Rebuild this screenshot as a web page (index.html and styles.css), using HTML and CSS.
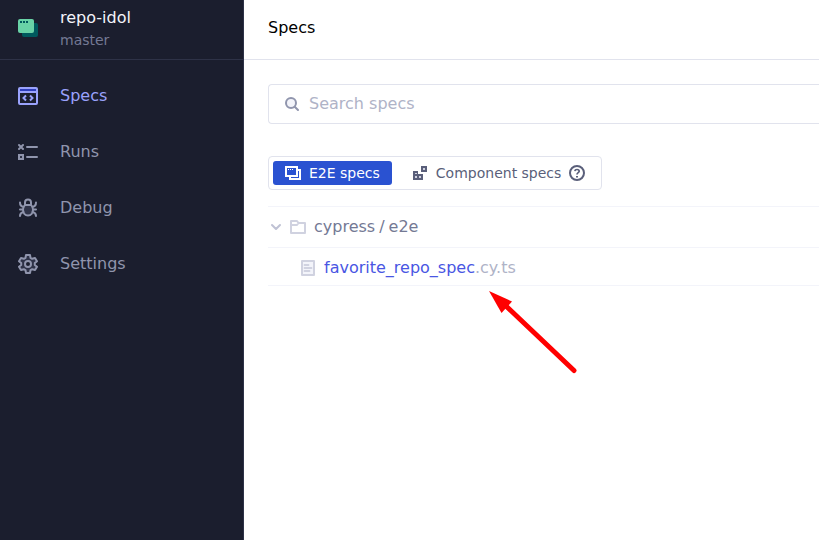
FILE: index.html
```html
<!DOCTYPE html>
<html lang="en">
<head>
<meta charset="utf-8">
<title>Specs</title>
<link rel="stylesheet" href="styles.css">
</head>
<body>
<div class="app">
  <aside class="sidebar">
    <header class="project">
      <svg class="nav-icon" width="20" height="20" viewBox="0 0 20 20"><rect x="4" y="5" width="16" height="14" rx="2" fill="#00595d"/><rect width="16" height="14" y="1" rx="2" fill="#69d3a7"/><path d="M2 3h2v2H2zM5 3h2v2H5zM8 3h2v2H8z" fill="#00595d"/></svg>
      <div>
        <div class="project-name">repo-idol</div>
        <div class="branch">master</div>
      </div>
    </header>
    <nav>
      <a class="nav-item active">
        <svg class="nav-icon" width="20" height="20" viewBox="0 0 20 20" fill="none" stroke="#9aa2fc" stroke-width="2"><rect x="1" y="2" width="18" height="16" rx="1"/><path d="M1 6h18M8 9.500l-2.500 2.500L8 14.500M12 9.500l2.500 2.500-2.500 2.500"/><path d="M2 3h16v2H2z" fill="#2e3dbb" stroke="none"/></svg>
        <span>Specs</span>
      </a>
      <a class="nav-item">
        <svg class="nav-icon" width="20" height="20" viewBox="0 0 20 20" fill="none" stroke="#9095ad" stroke-width="2"><path d="M1 3l4 4M5 3L1 7M9 5h10M9 15h10" stroke-linecap="round"/><rect x="1" y="13" width="4" height="4" fill="#2e3247"/></svg>
        <span>Runs</span>
      </a>
      <a class="nav-item">
        <svg class="nav-icon" width="20" height="20" viewBox="0 0 20 20" fill="none" stroke="#9095ad" stroke-width="2" stroke-linecap="round"><path d="M7 7V4.500a3 3 0 0 1 6 0V7"/><path d="M7 7h6c1.300 1 2 2.500 2 4.500 0 3.500-2 6-5 6s-5-2.500-5-6C5 9.500 5.700 8 7 7z" fill="#2e3247"/><path d="M5.500 9C3 8.500 2 7.500 2 4.500M14.500 9C17 8.500 18 7.500 18 4.500M5 11.500H2M15 11.500h3M5.500 14C3 14.500 2 15.500 2 18M14.500 14c2.500.5 3.500 1.500 3.500 4"/></svg>
        <span>Debug</span>
      </a>
      <a class="nav-item">
        <svg class="nav-icon" width="20" height="20" viewBox="0 0 20 20" fill="none" stroke="#9095ad" stroke-width="2" stroke-linejoin="round"><path d="M8 1h4l.5 2.800 1.700 1L17 4l2 3.300-2.200 1.800v1.900L19 12.700 17 16l-2.800-.8-1.700 1L12 19H8l-.5-2.800-1.700-1L3 16l-2-3.300L3.200 11V9.100L1 7.300 3 4l2.800.8 1.700-1z" fill="#2e3247"/><circle cx="10" cy="10" r="3" fill="#1b1e2e"/></svg>
        <span>Settings</span>
      </a>
    </nav>
  </aside>
  <main class="main">
    <h1 class="title">Specs</h1>
    <section class="content">
      <div class="search">
        <svg width="16" height="16" viewBox="0 0 16 16" fill="none" stroke="#9095ad" stroke-width="2" stroke-linecap="round"><circle cx="7" cy="7" r="5" fill="#f3f4fa"/><path d="M10.700 10.700L14 14"/></svg>
        <span>Search specs</span>
      </div>
      <div class="tabs">
        <div class="tab selected">
          <svg width="16" height="16" viewBox="0 0 16 16" fill="none" stroke="#fff" stroke-width="2"><path d="M13 5h2v9H5v-2M1 2h11v9H1z"/><path d="M3 4.500h1M5 4.500h1M7 4.500h1" stroke-width="1"/></svg>
          <span>E2E specs</span>
        </div>
        <div class="tab">
          <svg width="16" height="16" viewBox="0 0 16 16"><path d="M1 6h5v3h5v6H1zM9 1h6v6H9z" fill="#5a5f7a"/><path d="M3 8h2v1H3zM3 11h2v2H3zM7 11h2v2H7zM11 3h2v2h-2z" fill="#d0d2e0"/></svg>
          <span>Component specs</span>
          <svg width="16" height="16" viewBox="0 0 16 16" fill="none" stroke="#5a5f7a" stroke-width="2"><circle cx="8" cy="8" r="7"/><path d="M5.800 6.200C6 4.900 6.800 4.500 8 4.500c1.300 0 2.200.7 2.200 1.800C10.200 7.700 8 7.700 8 9.500" stroke-width="1.700"/><path d="M7 11h2v1.500H7z" fill="#5a5f7a" stroke="none"/></svg>
        </div>
      </div>
      <div class="tree">
        <div class="row folder">
          <svg width="16" height="16" viewBox="0 0 16 16" fill="none" stroke="#bfc2d4" stroke-width="2" stroke-linecap="round" stroke-linejoin="round"><path d="M4 6l4 4 4-4"/></svg>
          <svg class="folder-icon" width="16" height="16" viewBox="0 0 16 16" fill="none" stroke="#d0d2e0" stroke-width="2" stroke-linejoin="round"><path d="M1 14V2h6l1.500 2H15v10zM1 6h6l1.500-2"/></svg>
          <span class="path">cypress<i>/</i>e2e</span>
        </div>
        <div class="row file">
          <svg width="16" height="16" viewBox="0 0 16 16" fill="none" stroke="#d0d2e0" stroke-width="2" stroke-linejoin="round"><path d="M2 1h12v14H2z" fill="#f3f4fa"/><path d="M4.500 5h4M4.500 8h7M4.500 11h5" stroke-width="1.800" stroke-linecap="round"/></svg>
          <span class="filename">favorite_repo_spec<span class="ext">.cy.ts</span></span>
        </div>
      </div>
    </section>
  </main>
  <svg class="arrow" width="92" height="88" viewBox="0 0 92 88"><path d="M17 16l68 64.500" stroke="red" stroke-width="5" stroke-linecap="round"/><path d="M0 1l23 10.500L12.500 23z" fill="red"/></svg>
</div>
</body>
</html>
```
FILE: styles.css
```css
* { box-sizing: border-box; }
body {
  margin: 0;
  font: 16px/24px "DejaVu Sans", sans-serif;
  background: #fff;
}
svg { display: block; flex: none; }
.app {
  position: relative;
  display: flex;
  height: 540px;
  overflow: hidden;
}
.sidebar {
  flex: none;
  width: 244px;
  background: #1b1e2e;
  border-right: 1px solid #2e3247;
}
.project {
  display: flex;
  height: 60px;
  padding: 6px 0 0 18px;
  border-bottom: 1px solid #2e3247;
}
.project .nav-icon { margin-top: 12px; }
.project-name { color: #f3f4fa; }
.branch {
  color: #747994;
  font-size: 14px;
  line-height: 20px;
}
.nav-icon { margin-right: 22px; }
.nav-item {
  display: flex;
  align-items: center;
  height: 56px;
  padding-left: 18px;
  color: #9095ad;
}
nav { padding-top: 8px; }
.nav-item span { padding-bottom: 1px; }
.active { color: #9aa2fc; }
.main { flex: 1; min-width: 0; }
.title {
  height: 60px;
  margin: 0;
  padding: 16px 24px;
  border-bottom: 1px solid #e1e3ed;
  font-size: 16px;
  font-weight: 400;
  color: #000;
}
.content { padding: 24px 0 0 24px; }
.search {
  display: flex;
  align-items: center;
  gap: 9px;
  height: 40px;
  padding-left: 15px;
  border: 1px solid #e1e3ed;
  border-right: 0;
  border-radius: 4px 0 0 4px;
  color: #afb3c7;
}
.tabs {
  display: flex;
  width: 334px;
  height: 34px;
  margin-top: 32px;
  padding: 4px;
  border: 1px solid #e1e3ed;
  border-radius: 4px;
  font-size: 14px;
}
.tab {
  display: flex;
  align-items: center;
  gap: 8px;
  height: 24px;
  padding: 0 12px;
  border-radius: 3px;
  color: #5a5f7a;
  white-space: nowrap;
}
.tab + .tab { margin-left: 8px; }
.selected { width: 119px; background: #2a52d1; color: #fff; }
.tree { margin-top: 16px; }
.row {
  display: flex;
  align-items: center;
  border-top: 1px solid #f3f4fa;
}
.folder { height: 41px; color: #747994; }
.folder-icon { margin: 0 8px 0 6px; }
.path { padding-bottom: 1px; }
.path i { margin: 0 4px; font-style: normal; }
.file {
  height: 39px;
  padding: 2px 0 0 32px;
  border-bottom: 1px solid #f3f4fa;
  color: #4956e3;
}
.filename { margin-left: 8px; }
.ext { color: #afb3c7; }
.arrow {
  position: absolute;
  left: 489px;
  top: 290px;
}
```
